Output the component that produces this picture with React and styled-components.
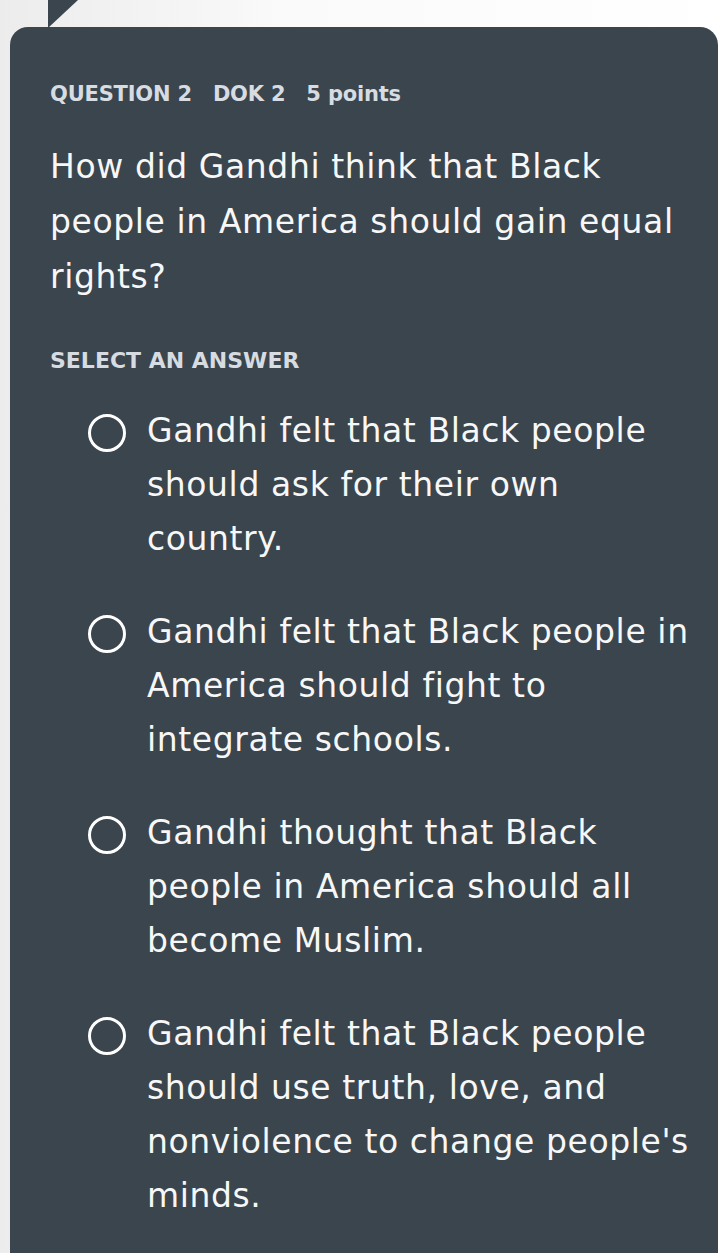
import React from 'react';
import styled, { createGlobalStyle } from 'styled-components';

const GlobalStyle = createGlobalStyle`
  html, body {
    margin: 0;
    padding: 0;
    background: linear-gradient(90deg, #ececec 0%, #fafafa 40%, #ffffff 100%);
    font-family: "DejaVu Sans", "Noto Sans", sans-serif;
  }
`;

const Page = styled.div`
  position: relative;
  padding: 27px 6px 0 10px;
  height: 1253px;
  box-sizing: border-box;
  overflow: hidden;
`;

const Pointer = styled.div`
  position: absolute;
  left: 48px;
  top: 0;
  width: 0;
  height: 0;
  border-top: 28px solid #3a454d;
  border-right: 30px solid transparent;
`;

const Card = styled.section`
  background: #3a454d;
  border-radius: 18px 18px 0 0;
  min-height: 1240px;
  padding: 54px 18px 0 40px;
  box-sizing: border-box;
  color: #f7f7f7;
`;

const Meta = styled.div`
  display: flex;
  gap: 21px;
  font-weight: 700;
  font-size: 21px;
  line-height: 26px;
  letter-spacing: -0.2px;
  color: #d6dce1;
`;

const Prompt = styled.p`
  margin: 32px 0 0;
  font-size: 33px;
  line-height: 55px;
  letter-spacing: 0.6px;
`;

const Label = styled.div`
  margin-top: 44px;
  font-weight: 700;
  font-size: 22px;
  line-height: 26px;
  color: #d6dce1;
`;

const Options = styled.div`
  display: flex;
  flex-direction: column;
  gap: 39px;
  margin-top: 30px;
  padding-left: 38px;
`;

const Option = styled.label`
  display: flex;
  align-items: flex-start;
  gap: 21px;
  cursor: pointer;
`;

const Radio = styled.span`
  flex: none;
  width: 32px;
  height: 32px;
  margin-top: 10px;
  border: 3.5px solid #ffffff;
  border-radius: 50%;
`;

const OptionText = styled.span`
  font-size: 33px;
  line-height: 54px;
  letter-spacing: 0.6px;
`;

const answers = [
  'Gandhi felt that Black people should ask for their own country.',
  'Gandhi felt that Black people in America should fight to integrate schools.',
  'Gandhi thought that Black people in America should all become Muslim.',
  "Gandhi felt that Black people should use truth, love, and nonviolence to change people's minds.",
];

const App = () => (
  <>
    <GlobalStyle />
    <Page>
      <Pointer />
      <Card>
        <Meta>
          <span>QUESTION 2</span>
          <span>DOK 2</span>
          <span>5 points</span>
        </Meta>
        <Prompt>How did Gandhi think that Black people in America should gain equal rights?</Prompt>
        <Label>SELECT AN ANSWER</Label>
        <Options>
          {answers.map((text) => (
            <Option key={text}>
              <Radio />
              <OptionText>{text}</OptionText>
            </Option>
          ))}
        </Options>
      </Card>
    </Page>
  </>
);

export default App;
